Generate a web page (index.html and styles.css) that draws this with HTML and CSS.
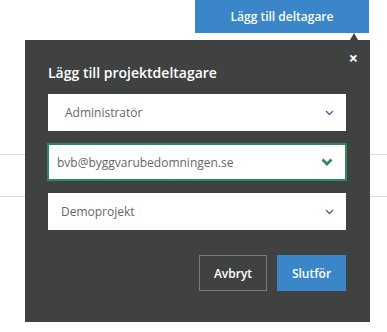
FILE: index.html
```html
<!DOCTYPE html>
<html lang="sv">
<head>
  <meta charset="UTF-8" />
  <title>Lägg till deltagare</title>
  <link rel="stylesheet" href="styles.css">
</head>
<body>
  <div class="toolbar">
    <button class="btn-add">Lägg till deltagare</button>
  </div>

  <div class="rows">
    <div class="row"></div>
    <div class="row"></div>
  </div>

  <div class="popover">
    <span class="arrow"></span>
    <button class="close">&times;</button>
    <h2 class="title">Lägg till projektdeltagare</h2>

    <div class="field">
      <span class="value">Administratör</span>
      <svg class="chev" width="9" height="6" viewBox="0 0 9 6"><path d="M1 1l3.5 3.5L8 1" fill="none" stroke="#4a6a8a" stroke-width="1.4"/></svg>
    </div>

    <div class="field valid">
      <span class="value">bvb@byggvarubedomningen.se</span>
      <svg class="chev" width="12" height="8" viewBox="0 0 12 8"><path d="M1.5 1.5l4.5 4.5 4.5-4.5" fill="none" stroke="#2e8b57" stroke-width="2.8"/></svg>
    </div>

    <div class="field project">
      <span class="value">Demoprojekt</span>
      <svg class="chev" width="9" height="6" viewBox="0 0 9 6"><path d="M1 1l3.5 3.5L8 1" fill="none" stroke="#4a6a8a" stroke-width="1.4"/></svg>
    </div>

    <div class="actions">
      <button class="btn-cancel">Avbryt</button>
      <button class="btn-done">Slutför</button>
    </div>
  </div>
</body>
</html>
```

FILE: styles.css
```css
* {
  box-sizing: border-box;
}

body {
  margin: 0;
  background: #fff;
  font-family: 'Open Sans', sans-serif;
  position: relative;
  height: 332px;
  overflow: hidden;
}

button {
  font-family: inherit;
  cursor: pointer;
}

.toolbar {
  display: flex;
  justify-content: flex-end;
  padding-right: 18px;
}

.btn-add {
  width: 174px;
  height: 33px;
  border: none;
  background: #3a86c8;
  color: #fff;
  font-size: 12px;
  font-weight: 600;
}

.rows {
  margin-top: 121px;
}

.row {
  height: 42px;
  border-top: 1px solid #dcdcdc;
}

.popover {
  position: absolute;
  top: 40px;
  left: 25px;
  width: 345px;
  height: 282px;
  background: #404242;
  padding: 23px 24px 32px 23px;
}

.arrow {
  position: absolute;
  top: -7px;
  right: 12px;
  border-left: 4px solid transparent;
  border-right: 4px solid transparent;
  border-bottom: 7px solid #404242;
}

.close {
  position: absolute;
  top: 10px;
  right: 12px;
  background: none;
  border: none;
  color: #fff;
  font-size: 16px;
  font-weight: 700;
  line-height: 16px;
  padding: 0;
}

.title {
  margin: 0 0 12px;
  color: #fff;
  font-size: 14px;
  font-weight: 600;
  line-height: 19px;
}

.field {
  display: flex;
  align-items: center;
  justify-content: space-between;
  height: 37px;
  background: #fff;
  padding: 0 12px 0 17px;
  margin-bottom: 12px;
}

.field.valid {
  height: 38px;
  margin: 0 -1px 12px;
  border: 2px solid #2e8b57;
  padding: 0 12px 0 8px;
}

.field.project {
  padding-left: 13px;
}

.value {
  color: #666;
  font-size: 12px;
}

.actions {
  display: flex;
  justify-content: flex-end;
  gap: 10px;
  margin-top: 25px;
}

.btn-cancel,
.btn-done {
  height: 36px;
  font-size: 12px;
  font-weight: 600;
  color: #fff;
}

.btn-cancel {
  width: 68px;
  background: transparent;
  border: 1px solid #7a7a7a;
}

.btn-done {
  width: 69px;
  background: #3a86c8;
  border: none;
}
```
